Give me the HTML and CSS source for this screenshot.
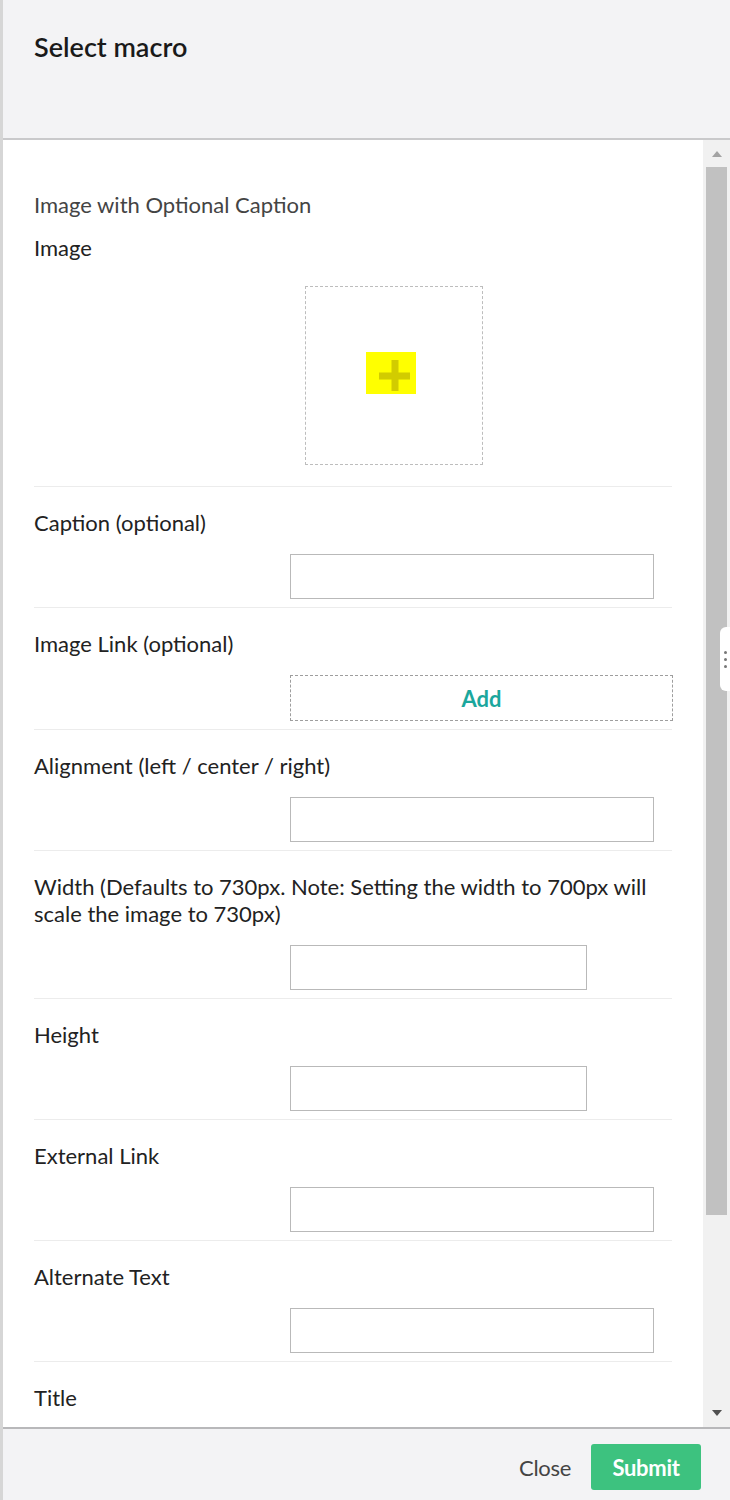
FILE: index.html
```html
<!DOCTYPE html>
<html lang="en">
<head>
<meta charset="utf-8">
<title>Select macro</title>
<link rel="stylesheet" href="styles.css">
</head>
<body>
<div class="app">
  <div class="edge"></div>
  <div class="modal">
    <header class="header">
      <h1 class="title">Select macro</h1>
    </header>
    <div class="body">
      <div class="content">
        <div class="intro">Image with Optional Caption</div>
        <div class="row row-image">
          <div class="label">Image</div>
          <div class="picker">
            <div class="picker-box">
              <svg class="plus" width="50" height="42" viewBox="0 0 50 42">
                <rect x="0" y="0" width="50" height="42" fill="#ffff00"/>
                <path d="M29 8 V39 M13 24 H44" stroke="#d2cc00" stroke-width="7" fill="none"/>
              </svg>
            </div>
          </div>
        </div>
        <div class="row">
          <div class="label">Caption (optional)</div>
          <div class="control"><input class="input" type="text"></div>
        </div>
        <div class="row">
          <div class="label">Image Link (optional)</div>
          <div class="control"><div class="add">Add</div></div>
        </div>
        <div class="row">
          <div class="label">Alignment (left / center / right)</div>
          <div class="control"><input class="input" type="text"></div>
        </div>
        <div class="row">
          <div class="label">Width (Defaults to 730px. Note: Setting the width to 700px will scale the image to 730px)</div>
          <div class="control"><input class="input short" type="text"></div>
        </div>
        <div class="row">
          <div class="label">Height</div>
          <div class="control"><input class="input short" type="text"></div>
        </div>
        <div class="row">
          <div class="label">External Link</div>
          <div class="control"><input class="input" type="text"></div>
        </div>
        <div class="row">
          <div class="label">Alternate Text</div>
          <div class="control"><input class="input" type="text"></div>
        </div>
        <div class="row">
          <div class="label">Title</div>
          <div class="control"><input class="input" type="text"></div>
        </div>
      </div>
      <div class="scrollbar">
        <div class="sb-btn"><span class="tri-up"></span></div>
        <div class="sb-thumb"></div>
        <div class="sb-rest"></div>
        <div class="sb-btn sb-btn-down"><span class="tri-down"></span></div>
      </div>
      <div class="handle"><span></span><span></span><span></span></div>
    </div>
    <footer class="footer">
      <button class="btn-close" type="button">Close</button>
      <button class="btn-submit" type="button">Submit</button>
    </footer>
  </div>
</div>
</body>
</html>
```

FILE: styles.css
```css
* { box-sizing: border-box; }
html, body {
  margin: 0;
  padding: 0;
  width: 730px;
  height: 1500px;
  overflow: hidden;
  background: #ffffff;
  font-family: Lato, "Open Sans", "Liberation Sans", sans-serif;
  color: #222222;
}
.app {
  display: flex;
  height: 1500px;
}
.edge {
  width: 3px;
  flex: none;
  background: #d6d6d6;
}
.modal {
  flex: 1;
  display: flex;
  flex-direction: column;
  min-width: 0;
}
.header {
  height: 140px;
  flex: none;
  background: #f3f3f5;
  border-bottom: 2px solid #c9c9cb;
  padding: 31px 31px 0;
}
.title {
  margin: 0;
  font-size: 27px;
  line-height: 32px;
  font-weight: 600;
  color: #1a1a1a;
}
.body {
  flex: 1;
  display: flex;
  min-height: 0;
  position: relative;
  overflow: hidden;
}
.content {
  flex: 1;
  padding: 52px 31px 0 31px;
  overflow: hidden;
}
.intro {
  font-size: 22px;
  line-height: 26px;
  color: #444444;
  margin-bottom: 16px;
}
.row {
  border-bottom: 1px solid #ececec;
  padding: 22px 0 8px;
}
.row-image {
  padding-top: 0;
  padding-bottom: 21px;
}
.label {
  font-size: 22px;
  line-height: 27px;
  color: #222222;
  padding-right: 6px;
}
.picker {
  padding-left: 271px;
  margin-top: 25px;
}
.picker-box {
  width: 178px;
  height: 179px;
  border: 1px dashed #bdbdbd;
  display: flex;
  align-items: center;
  justify-content: center;
}
.plus { display: block; margin: 0 6px 6px 0; }
.control {
  padding-left: 256px;
  margin-top: 18px;
}
.input {
  display: block;
  width: 364px;
  height: 45px;
  border: 1px solid #b9b9b9;
  border-radius: 0;
  background: #ffffff;
  padding: 0 10px;
  margin: 0;
  font: inherit;
  outline: none;
}
.input.short { width: 297px; }
.add {
  width: 383px;
  height: 46px;
  border: 1px dashed #9e9e9e;
  display: flex;
  align-items: center;
  justify-content: center;
  font-size: 22px;
  font-weight: 700;
  color: #1ba79d;
}
.scrollbar {
  width: 27px;
  flex: none;
  background: #f1f1f1;
  display: flex;
  flex-direction: column;
  align-items: center;
}
.sb-btn {
  height: 27px;
  width: 100%;
  display: flex;
  align-items: center;
  justify-content: center;
  flex: none;
}
.sb-btn-down { height: 28px; }
.tri-up, .tri-down {
  width: 0;
  height: 0;
  border-left: 5px solid transparent;
  border-right: 5px solid transparent;
}
.tri-up { border-bottom: 6px solid #a3a3a3; }
.tri-down { border-top: 6px solid #505050; }
.sb-thumb {
  width: 21px;
  height: 1048px;
  background: #c1c1c1;
  flex: none;
}
.sb-rest { flex: 1; }
.handle {
  position: absolute;
  right: 0;
  top: 487px;
  width: 10px;
  height: 64px;
  background: #ffffff;
  border-radius: 6px 0 0 6px;
  display: flex;
  flex-direction: column;
  align-items: center;
  justify-content: center;
  gap: 4px;
}
.handle span {
  width: 3px;
  height: 3px;
  border-radius: 50%;
  background: #777777;
}
.footer {
  height: 73px;
  flex: none;
  background: #f3f3f5;
  border-top: 2px solid #b8b8ba;
  display: flex;
  align-items: center;
  justify-content: flex-end;
  padding: 5px 29px 0 0;
  gap: 20px;
}
.btn-close {
  border: none;
  background: none;
  padding: 0;
  font: inherit;
  font-size: 22px;
  color: #444444;
  cursor: pointer;
  letter-spacing: -0.3px;
}
.btn-submit {
  width: 110px;
  height: 46px;
  border: none;
  border-radius: 3px;
  background: #3dc27f;
  color: #ffffff;
  font: inherit;
  font-size: 22px;
  font-weight: 700;
  letter-spacing: -0.3px;
  cursor: pointer;
}
```
